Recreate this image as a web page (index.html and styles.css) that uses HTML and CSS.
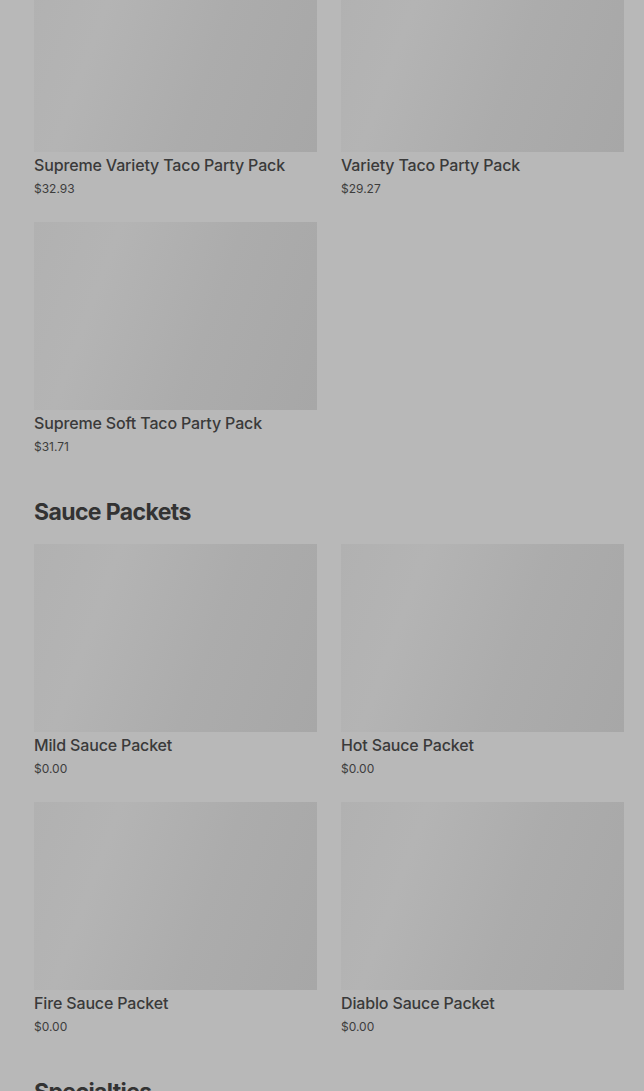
FILE: index.html
```html
<!DOCTYPE html>
<html lang="en">
<head>
    <meta charset="UTF-8">
    <meta name="viewport" content="width=device-width, initial-scale=1.0">
    <title>Menu</title>
    <link rel="stylesheet" href="styles.css">
</head>
<body>
    <main class="menu">
        <section class="category">
            <ul class="grid">
                <li class="item">
                    <div class="thumb"></div>
                    <p class="name">Supreme Variety Taco Party Pack</p>
                    <p class="price">$32.93</p>
                </li>
                <li class="item">
                    <div class="thumb"></div>
                    <p class="name">Variety Taco Party Pack</p>
                    <p class="price">$29.27</p>
                </li>
                <li class="item">
                    <div class="thumb"></div>
                    <p class="name">Supreme Soft Taco Party Pack</p>
                    <p class="price">$31.71</p>
                </li>
            </ul>
        </section>
        <section class="category">
            <h2>Sauce Packets</h2>
            <ul class="grid">
                <li class="item">
                    <div class="thumb"></div>
                    <p class="name">Mild Sauce Packet</p>
                    <p class="price">$0.00</p>
                </li>
                <li class="item">
                    <div class="thumb"></div>
                    <p class="name">Hot Sauce Packet</p>
                    <p class="price">$0.00</p>
                </li>
                <li class="item">
                    <div class="thumb"></div>
                    <p class="name">Fire Sauce Packet</p>
                    <p class="price">$0.00</p>
                </li>
                <li class="item">
                    <div class="thumb"></div>
                    <p class="name">Diablo Sauce Packet</p>
                    <p class="price">$0.00</p>
                </li>
            </ul>
        </section>
        <section class="category">
            <h2>Specialties</h2>
        </section>
    </main>
</body>
</html>
```

FILE: styles.css
```css
* {
    margin: 0;
    padding: 0;
    box-sizing: border-box;
}
ul {
    list-style: none;
}
body {
    background-color: #b8b8b8;
    color: #363636;
    font-family: Inter, "Liberation Sans", sans-serif;
    overflow: hidden;
}
.menu {
    margin-top: -36px;
    padding: 0 20px 0 34px;
}
.category + .category {
    margin-top: 39px;
}
.category h2 {
    font-size: 23px;
    line-height: 32px;
    font-weight: 700;
    letter-spacing: -0.6px;
    color: #333;
    margin-bottom: 16px;
    padding-top: 1px;
}
.grid {
    display: grid;
    grid-template-columns: 283px 283px;
    column-gap: 24px;
    row-gap: 24px;
}
.thumb {
    height: 188px;
    background: linear-gradient(110deg, #b1b1b1 0%, #b4b4b4 25%, #acacac 60%, #a7a7a7 100%);
}
.name {
    margin-top: 2px;
    font-size: 16px;
    line-height: 22px;
    font-weight: 500;
    letter-spacing: -0.15px;
    color: #3a3a3a;
}
.price {
    margin-top: 3px;
    font-size: 12px;
    line-height: 19px;
    color: #3d3d3d;
}
```
